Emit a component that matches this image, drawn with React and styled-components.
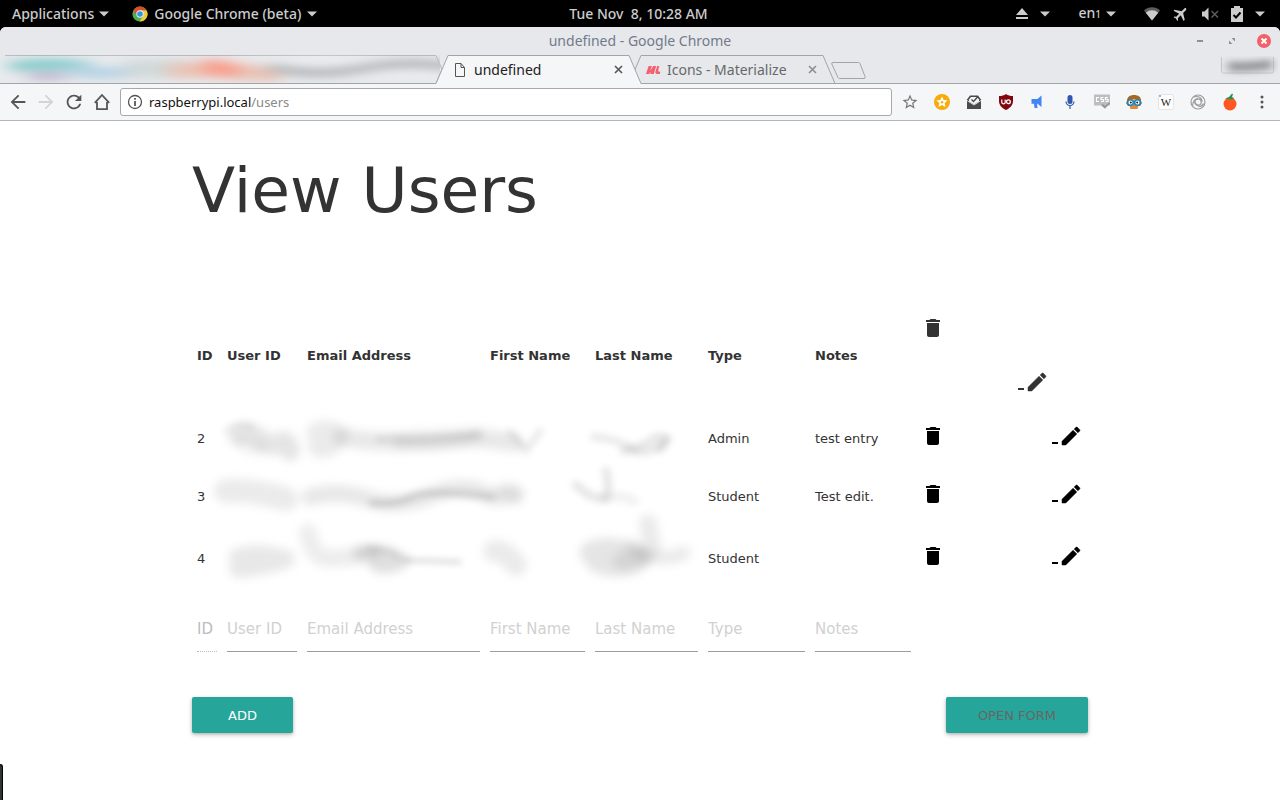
import React from "react";
import styled, { createGlobalStyle, css } from "styled-components";

const UI_FONT = '"Noto Sans", "Open Sans", sans-serif';
const PAGE_FONT = 'Verdana, "DejaVu Sans", sans-serif';

const GlobalStyle = createGlobalStyle`
  *, *::before, *::after { box-sizing: border-box; }
  body { margin: 0; background: #000; }
  svg { display: block; flex: none; }
  button { border: 0; padding: 0; margin: 0; background: none; font: inherit; color: inherit; cursor: pointer; }
`;

const Desktop = styled.div`
  min-height: 100vh;
  display: flex;
  flex-direction: column;
`;

/* ---------- desktop panel ---------- */

const Panel = styled.header`
  display: grid;
  grid-template-columns: 1fr auto 1fr;
  align-items: center;
  height: 27px;
  padding: 0 15px 0 12px;
  background: #000;
  color: #ccc;
  font: 500 14px/26px ${UI_FONT};
`;

const PanelGroup = styled.div`
  display: flex;
  align-items: center;
  gap: ${(p) => p.$gap}px;
  justify-content: ${(p) => (p.$end ? "flex-end" : "flex-start")};
`;

const PanelButton = styled.button`
  display: flex;
  align-items: center;
  gap: ${(p) => p.$gap || 5}px;
  white-space: pre;
`;

const LayoutIndex = styled.small`
  font-size: 10px;
`;

/* ---------- window frame ---------- */

const Window = styled.div`
  flex: 1;
  display: flex;
  flex-direction: column;
  overflow: hidden;
  border-radius: 6px 6px 0 0;
  background: #fff;
`;

const TitleBar = styled.div`
  display: grid;
  grid-template-columns: 1fr auto 1fr;
  align-items: center;
  height: 28px;
  padding: 0 8px;
  background: #e7e8eb;
  color: #727a8c;
  font: 14px/28px ${UI_FONT};
`;

const WindowTitle = styled.span`
  grid-column: 2;
`;

const WindowControls = styled.div`
  display: flex;
  justify-content: flex-end;
  gap: 16px;
`;

const TabStrip = styled.div`
  display: flex;
  align-items: flex-start;
  height: 29px;
  background: #e7e8eb;
  box-shadow: inset 0 -1px 0 #a2a4a8;
`;

const Tab = styled.div`
  position: relative;
  z-index: ${(p) => (p.$active ? 2 : 1)};
  display: flex;
  align-items: center;
  width: ${(p) => p.$width}px;
  height: 29px;
  padding: 0 18px 0 16px;
  margin-right: -12px;
  color: ${(p) => (p.$active ? "#222" : "#66686c")};
  font: 14px/29px ${UI_FONT};
`;

const TabShape = styled.svg`
  position: absolute;
  inset: 0;
  z-index: -1;
`;

const TabLabel = styled.span`
  flex: 1;
  margin-left: 6px;
  white-space: nowrap;
`;

const NewTab = styled.button`
  margin: 7px 0 0 8px;
`;

const Profile = styled.button`
  margin: 1px 2px 0 auto;
`;

const Toolbar = styled.div`
  display: flex;
  align-items: center;
  height: 37px;
  padding: 0 2px 0 4px;
  background: #f5f6f7;
  border-bottom: 1px solid #b3b5b8;
`;

const ToolButton = styled.button`
  display: flex;
  align-items: center;
  justify-content: center;
  width: ${(p) => (p.$wide ? 32 : 28)}px;
  height: 28px;
`;

const AddressBar = styled.div`
  flex: 1;
  display: flex;
  align-items: center;
  gap: 6px;
  height: 28px;
  margin: 0 2px 0 4px;
  padding: 0 6px;
  border: 1px solid #a6a8ab;
  border-radius: 3px;
  background: #fff;
  color: #8a8a8a;
  font: 13px/26px ${UI_FONT};
`;

const Host = styled.span`
  color: #111;
`;

/* ---------- page ---------- */

const Page = styled.main`
  width: 70%;
  margin: 0 auto;
  color: #333;
  font: 13px/20px ${PAGE_FONT};
`;

const Title = styled.h1`
  margin: 35px 0 75px;
  font-size: 63px;
  line-height: 70px;
  font-weight: 400;
`;

const TableWrap = styled.div`
  position: relative;
`;

const Table = styled.table`
  width: 100%;
  table-layout: fixed;
  border-collapse: collapse;
`;

const HeadRow = styled.tr`
  height: 108px;
`;

const Row = styled.tr`
  height: ${(p) => (p.$tall ? 66 : 58)}px;
`;

const cell = css`
  padding: ${(p) => (p.$text ? 2 : 0)}px 5px 0;
  text-align: left;
  vertical-align: ${(p) => p.$align || "middle"};
  white-space: nowrap;
`;

const Th = styled.th`
  ${cell}
`;

const Td = styled.td`
  ${cell}
`;

const HeadIcon = styled.div`
  display: flex;
  justify-content: ${(p) => (p.$edit ? "flex-end" : "flex-start")};
  padding: ${(p) => (p.$edit ? "0 34px 15px 0" : "15px 0 0")};
`;

const IconButton = styled.button`
  display: block;
  margin-left: ${(p) => (p.$end ? "auto" : 0)};
  padding-bottom: 4px;
  color: #000;
`;

const Field = styled.input`
  display: block;
  width: 100%;
  height: 46px;
  margin: 15px 0 0;
  padding: 0;
  border: 0;
  border-bottom: 1px solid #9e9e9e;
  border-radius: 0;
  outline: 0;
  background: transparent;
  color: #333;
  font: 15px/45px Tahoma, "DejaVu Sans", sans-serif;

  &::placeholder { color: #d1d1d1; opacity: 1; }
  &:disabled { border-bottom: 1px dotted #bdbdbd; }
  &:disabled::placeholder { color: #bcbcbc; }
`;

const Smudges = styled.svg`
  position: absolute;
  top: 0;
  left: 0;
  overflow: visible;
  pointer-events: none;
`;

const Actions = styled.div`
  display: flex;
  justify-content: space-between;
  margin-top: 45px;
`;

const Button = styled.button`
  height: 36px;
  padding: 1px ${(p) => (p.$muted ? 32 : 36)}px 0;
  border-radius: 2px;
  background: #26a69a;
  box-shadow: 0 2px 5px rgba(0, 0, 0, 0.2), 0 1px 3px rgba(0, 0, 0, 0.16);
  color: ${(p) => (p.$muted ? "#666" : "#fff")};
  text-transform: uppercase;
`;

const StatusBubble = styled.div`
  position: fixed;
  left: 0;
  bottom: 0;
  width: 3px;
  height: 36px;
  border: solid #000;
  border-width: 1px 1px 0 0;
  border-radius: 0 3px 0 0;
  background: #2e3436;
`;

/* ---------- icons ---------- */

const Icon = ({ d, size = 24, color = "currentColor", ...rest }) => (
  <svg width={size} height={size} viewBox="0 0 24 24" fill={color} aria-hidden="true" {...rest}>
    <path d={d} />
  </svg>
);

const ARROW = "M20 11H7.83l5.59-5.59L12 4l-8 8 8 8 1.41-1.41L7.83 13H20v-2z";
const RELOAD =
  "M17.65 6.35C16.2 4.9 14.21 4 12 4c-4.42 0-7.99 3.58-7.99 8s3.57 8 7.99 8c3.73 0 6.84-2.55 7.73-6h-2.08c-.82 2.33-3.04 4-5.65 4-3.31 0-6-2.69-6-6s2.69-6 6-6c1.66 0 3.14.69 4.22 1.78L13 11h7V4l-2.35 2.35z";
const STAR =
  "M22 9.24l-7.19-.62L12 2 9.19 8.63 2 9.24l5.46 4.73L5.82 21 12 17.27 18.18 21l-1.63-7.03L22 9.24zM12 15.4l-3.76 2.27 1-4.28-3.32-2.88 4.38-.38L12 6.1l1.71 4.04 4.38.38-3.32 2.88 1 4.28L12 15.4z";
const TRASH = "M6 19c0 1.1.9 2 2 2h8c1.1 0 2-.9 2-2V7H6v12zM19 4h-3.5l-1-1h-5l-1 1H5v2h14V4z";
const PENCIL =
  "M3 17.25V21h3.75L17.81 9.94l-3.75-3.75L3 17.25zM20.71 7.04c.39-.39.39-1.02 0-1.41l-2.34-2.34c-.39-.39-1.02-.39-1.41 0l-1.83 1.83 3.75 3.75 1.83-1.83z";
const PLANE =
  "M21 16v-2l-8-5V3.5c0-.83-.67-1.5-1.5-1.5S10 2.67 10 3.5V9l-8 5v2l8-2.5V19l-2 1.5V22l3.5-1 3.5 1v-1.5L13 19v-5.5l8 2.5z";

const Caret = () => (
  <svg width="10" height="6" viewBox="0 0 10 6" fill="#ccc" aria-hidden="true">
    <path d="M0 .5h10L5 5.5z" />
  </svg>
);

const EditIcon = () => (
  <svg width="31" height="24" viewBox="0 0 31 24" fill="currentColor" aria-hidden="true">
    <path d="M0 18h6v2H0z" />
    <path transform="translate(7 0)" d={PENCIL} stroke="currentColor" strokeWidth=".5" />
  </svg>
);

const ChromeLogo = () => (
  <svg width="16" height="16" viewBox="0 0 16 16" aria-hidden="true">
    <circle cx="8" cy="8" r="7.6" fill="#4caf50" />
    <path d="M8 8L1.4 4.2A7.6 7.6 0 0 1 14.6 4.3L8 4.3z" fill="#dd4b2f" />
    <path d="M8 4.4h6.6A7.6 7.6 0 0 1 7.6 15.6L11.2 9.8z" fill="#f2c83d" />
    <path d="M1.4 4.2L4.8 9.8 8 8V4.4z" fill="#dd4b2f" />
    <circle cx="8" cy="8" r="3.7" fill="#f1f1f1" />
    <circle cx="8" cy="8" r="2.8" fill="#2f97e0" />
  </svg>
);

const EjectIcon = () => (
  <svg width="12" height="12" viewBox="0 0 12 12" fill="#ccc" aria-hidden="true">
    <path d="M6 0l6 7H0zM0 9h12v2H0z" />
  </svg>
);

const WifiIcon = () => (
  <svg width="16" height="14" viewBox="0 0 16 14" aria-hidden="true">
    <path d="M0 3.5a11.5 11.5 0 0 1 16 0L8 13.5z" fill="#5c5c5c" />
    <path d="M1.8 5.7a9 9 0 0 1 12.4 0L8 13.5z" fill="#ccc" />
  </svg>
);

const MutedIcon = () => (
  <svg width="17" height="14" viewBox="0 0 17 14" aria-hidden="true">
    <path d="M0 4.500h2.500l4-4v13l-4-4H0z" fill="#ccc" />
    <path d="M9.500 4l6.500 6.500M16 4l-6.500 6.500" stroke="#5c5c5c" strokeWidth="1.500" />
  </svg>
);

const BatteryIcon = () => (
  <svg width="12" height="16" viewBox="0 0 12 16" aria-hidden="true">
    <path d="M0 2h3V0h6v2h3v14H0z" fill="#ccc" />
    <path d="M2.500 9l2.500 2.500 4.500-5" fill="none" stroke="#000" strokeWidth="2" />
  </svg>
);

const PageIcon = () => (
  <svg width="16" height="16" viewBox="0 0 16 16" fill="none" stroke="#555" aria-hidden="true">
    <path d="M3.500 1.500h5.500l3.500 4v9h-9zM9 1.500v4h3.500" />
  </svg>
);

const MaterializeIcon = () => (
  <svg width="16" height="16" viewBox="0 0 16 16" fill="#f4606f" aria-hidden="true">
    <path d="M3.600 4h3.200L4.400 12H1zM8.200 4h3L8.800 12H5.600L5 9.600zM12.200 4h2l-1 4.500c0 1.200.8 1.300 2.200 1.300l-.6 2.200h-2.600c-1.600 0-2.100-1-1.700-2.500z" />
  </svg>
);

const CloseX = ({ color }) => (
  <svg width="9" height="9" viewBox="0 0 9 9" stroke={color} strokeWidth="1.600" aria-hidden="true">
    <path d="M1 1l7 7M8 1L1 8" />
  </svg>
);

const HomeIcon = () => (
  <svg width="18" height="18" viewBox="0 0 18 18" fill="none" stroke="#555" strokeWidth="1.800" aria-hidden="true">
    <path d="M1.800 9.800L9 2l7.200 7.800M4 9v7.100h10V9" />
  </svg>
);

const InfoIcon = () => (
  <svg width="16" height="16" viewBox="0 0 16 16" fill="none" stroke="#555" aria-hidden="true">
    <circle cx="8" cy="8" r="6.500" strokeWidth="1.300" />
    <path d="M8 7v5M8 4v1.800" strokeWidth="1.800" />
  </svg>
);

const extensions = [
  { name: "Bookmark", art: <Icon d={STAR} size={18} color="#777" /> },
  {
    name: "Star manager",
    art: (
      <svg width="16" height="16" viewBox="0 0 16 16">
        <circle cx="8" cy="8" r="8" fill="#f9ab0b" />
        <path d="M8 2.500l1.700 3.600 3.900.4-3 2.600.9 3.900L8 11l-3.500 2 .9-3.900-3-2.600 3.900-.4z" fill="#fff" />
        <circle cx="8" cy="8.300" r="1.300" fill="#f9ab0b" />
      </svg>
    ),
  },
  {
    name: "Inbox",
    art: (
      <svg width="16" height="16" viewBox="0 0 16 16">
        <path d="M1 5.500L4 1.500h8l3 4V15H1z" fill="#4a4a4a" />
        <path d="M3 5.500L5 3h6l2 2.500v2L8 10.500 3 7.500z" fill="#f4f4f4" />
        <path d="M5.500 5.500l2 2 4.500-5" fill="none" stroke="#4a4a4a" strokeWidth="1.400" />
        <path d="M1 6.500l7 4.500 7-4.500" fill="none" stroke="#f5f6f7" strokeWidth=".8" />
      </svg>
    ),
  },
  {
    name: "Shield",
    art: (
      <svg width="16" height="16" viewBox="0 0 16 16">
        <path d="M8 0c2 1.500 4 2 7 2v5c0 4-2.500 7-7 9-4.500-2-7-5-7-9V2c3 0 5-.5 7-2z" fill="#800610" />
        <path d="M3.800 5.500v2.700a1.700 1.700 0 0 0 3.400 0V5.500" fill="none" stroke="#fff" strokeWidth="1.200" />
        <circle cx="10.400" cy="7.700" r="1.900" fill="none" stroke="#fff" strokeWidth="1.300" />
      </svg>
    ),
  },
  {
    name: "Announcements",
    art: (
      <svg width="16" height="16" viewBox="0 0 16 16" fill="#4285f4">
        <path d="M1.500 5h6l4-3.500V13L7.500 9.800H7l.5 4.200H4.500L4 9.800H1.500z" />
      </svg>
    ),
  },
  {
    name: "Voice",
    art: (
      <svg width="16" height="16" viewBox="0 0 16 16">
        <rect x="5.500" y="1" width="5" height="9" rx="2.500" fill="#2f57ae" />
        <path d="M4 7.500a4 4 0 0 0 8 0M8 11.500V15" fill="none" stroke="#2f57ae" strokeWidth="1.200" />
      </svg>
    ),
  },
  {
    name: "CSS viewer",
    art: (
      <svg width="18" height="16" viewBox="0 0 18 16">
        <path d="M1 .5h16v11h-2L12 15l-4-3.500H1z" fill="#bdbdbd" />
        <path d="M6 3.500H3.500v4H6M10.500 3.500H8v2h2.500v2H8M15 3.500h-2.500v2H15v2h-2.500" fill="none" stroke="#fff" strokeWidth="1.200" />
        <path d="M9 10.500l3 2.500 4.500-4" fill="none" stroke="#8f8f8f" strokeWidth="1.500" />
      </svg>
    ),
  },
  {
    name: "Reader",
    art: (
      <svg width="16" height="16" viewBox="0 0 16 16">
        <path d="M1 7C1 3 4 1 8 1s7.500 2 7 6l1 2-2 3H2L0 9z" fill="#a9661f" />
        <path d="M3 10h10l-1.500 5h-7z" fill="#e2873c" />
        <path d="M3 6.500Q8 3 13 6.500v3H3z" fill="#e8a65a" />
        <circle cx="4.500" cy="8.500" r="2.800" fill="#fff" stroke="#1785c4" strokeWidth="1.500" />
        <circle cx="11.500" cy="8.500" r="2.800" fill="#fff" stroke="#1785c4" strokeWidth="1.500" />
        <circle cx="4.800" cy="8.500" r="1" fill="#222" />
        <circle cx="11.200" cy="8.500" r="1" fill="#222" />
      </svg>
    ),
  },
  {
    name: "Wikipedia",
    art: (
      <svg width="16" height="16" viewBox="0 0 16 16">
        <rect x=".5" y=".5" width="15" height="15" rx="2" fill="#fdfdfd" stroke="#e4e4e4" />
        <text x="8" y="12" textAnchor="middle" fontFamily="Liberation Serif, serif" fontSize="11" fill="#222">W</text>
        <circle cx="2" cy="2" r="1" fill="#4bb3c4" />
      </svg>
    ),
  },
  {
    name: "Swirl",
    art: (
      <svg width="16" height="16" viewBox="0 0 16 16" fill="none" stroke="#9b9b9b" strokeWidth="1.200">
        <circle cx="8" cy="8" r="7" />
        <circle cx="8" cy="8" r="3.200" />
        <path d="M4 2.800C8 1.800 12 3.500 12 8M2.600 11.500C3 7 5 4.800 8 4.800M13.500 9.500C12 13 8 14 4.800 8" />
      </svg>
    ),
  },
  {
    name: "Tomato timer",
    art: (
      <svg width="16" height="18" viewBox="0 0 16 18">
        <ellipse cx="8" cy="11" rx="6.500" ry="6.500" fill="#ff5722" />
        <path d="M3 5.500l4-1.500L10 .5l1 .8L10 4l2.500 1.500L8.500 6.500z" fill="#22964f" />
      </svg>
    ),
  },
  {
    name: "Menu",
    art: (
      <svg width="4" height="14" viewBox="0 0 4 14" fill="#555">
        <circle cx="2" cy="2" r="1.500" />
        <circle cx="2" cy="7" r="1.500" />
        <circle cx="2" cy="12" r="1.500" />
      </svg>
    ),
  },
];

/* ---------- tabs ---------- */

function BrowserTab({ width, active, icon, label }) {
  const slope = 12;
  return (
    <Tab $width={width} $active={active}>
      <TabShape width={width} height="29" viewBox={`0 0 ${width} 29`} aria-hidden="true">
        <path
          d={`M0 28.500L${slope} .5H${width - slope}L${width} 28.500${active ? "V29H0" : ""}`}
          fill={active ? "#f5f6f7" : "#e7e8eb"}
        />
        <path d={`M0 28.500L${slope} .5H${width - slope}L${width} 28.500`} fill="none" stroke="#a2a4a8" />
        {!active && <path d={`M0 28.500H${width}`} stroke="#a2a4a8" />}
      </TabShape>
      {icon}
      <TabLabel>{label}</TabLabel>
      <button aria-label={`Close ${label}`}>
        <CloseX color={active ? "#555" : "#8b8d91"} />
      </button>
    </Tab>
  );
}

function SmearedTabs() {
  return (
    <Tab $width={448}>
      <TabShape width="448" height="29" viewBox="0 0 448 29" aria-hidden="true">
        <defs>
          <filter id="tabBlur" filterUnits="userSpaceOnUse" x="-40" y="-20" width="520" height="70">
            <feGaussianBlur stdDeviation="10 4" />
          </filter>
          <clipPath id="tabClip"><rect width="440" height="29" /></clipPath>
        </defs>
        <path d="M5 .5H436l6 14" fill="none" stroke="#b4b6ba" />
        <g clipPath="url(#tabClip)">
          <g filter="url(#tabBlur)" fill="none">
            <path d="M-30 15Q60 11 120 14T240 14T470 14" stroke="#eceef0" strokeWidth="18" />
            <path d="M8 12Q50 7 92 12" stroke="#82cccc" strokeWidth="11" />
            <path d="M28 21H66" stroke="#c0b4d0" strokeWidth="8" />
            <path d="M70 16Q105 19 135 16" stroke="#b8d4e4" strokeWidth="12" />
            <path d="M125 14H190" stroke="#d0d9d9" strokeWidth="18" />
            <path d="M168 16Q220 13 280 20" stroke="#e8c4b6" strokeWidth="16" />
            <path d="M202 13Q220 11 240 17" stroke="#f8a08e" strokeWidth="16" />
            <path d="M268 12Q315 22 365 13T470 15" stroke="#b4b6b9" strokeWidth="9" />
          </g>
        </g>
        <path d="M0 28.500H436L442 14.500" fill="none" stroke="#a2a4a8" />
      </TabShape>
    </Tab>
  );
}

/* ---------- table data ---------- */

const columns = [
  { label: "ID", width: 30 },
  { label: "User ID", width: 80 },
  { label: "Email Address", width: 183 },
  { label: "First Name", width: 105 },
  { label: "Last Name", width: 113 },
  { label: "Type", width: 107 },
  { label: "Notes", width: 106 },
];

const users = [
  { id: 2, type: "Admin", notes: "test entry" },
  { id: 3, type: "Student", notes: "Test edit." },
  { id: 4, type: "Student", notes: "", tall: true },
];

/* Redaction strokes painted over the private columns: [path, width, opacity] */
const broadStrokes = [
  ["M46 134Q56 128 68 138T92 140Q98 144 98 150", 20, 0.1],
  ["M50 142Q60 150 68 146", 14, 0.05],
  ["M124 132Q136 126 146 134Q138 150 126 146", 20, 0.08],
  ["M150 136Q180 142 210 140T286 137Q300 138 322 142", 18, 0.09],
  ["M206 142Q250 146 286 134", 12, 0.07],
  ["M34 190Q60 188 94 198", 24, 0.08],
  ["M118 196Q146 188 176 198T240 194T300 196L322 194", 17, 0.09],
  ["M312 190Q318 188 324 194", 18, 0.05],
  ["M46 256Q66 250 94 258Q80 264 46 268", 18, 0.09],
  ["M116 232Q120 252 130 256T180 252", 18, 0.07],
  ["M168 252Q196 248 210 260Q198 268 184 264", 14, 0.12],
  ["M302 250Q314 250 324 264", 22, 0.08],
  ["M400 252Q420 244 446 258Q430 268 406 260", 24, 0.1],
  ["M430 260Q456 258 460 244L456 222", 18, 0.08],
  ["M440 246Q466 264 492 252", 14, 0.08],
];
const fineStrokes = [
  ["M34 130Q44 120 60 126", 5, 0.06],
  ["M186 138Q240 138 286 134", 6, 0.07],
  ["M318 132Q328 140 334 150L348 130", 7, 0.08],
  ["M402 136Q426 138 440 148T476 138", 8, 0.08],
  ["M432 150Q448 148 464 136Q480 134 468 148", 9, 0.09],
  ["M180 202Q204 204 220 196T300 196", 7, 0.12],
  ["M384 184Q398 198 414 198Q418 184 414 170", 9, 0.09],
  ["M412 196Q430 194 442 200", 10, 0.05],
  ["M178 248Q196 248 206 256", 6, 0.08],
  ["M212 259L268 261", 4, 0.16],
];

const renderStrokes = (list) =>
  list.map(([d, w, o]) => <path key={d} d={d} strokeWidth={w} opacity={o} />);

export default function App() {
  return (
    <Desktop>
      <GlobalStyle />
      <Panel>
        <PanelGroup $gap={23}>
          <PanelButton>Applications<Caret /></PanelButton>
          <PanelButton $gap={6}><ChromeLogo />Google Chrome (beta)<Caret /></PanelButton>
        </PanelGroup>
        <PanelButton>{"Tue Nov  8, 10:28 AM"}</PanelButton>
        <PanelGroup $gap={28} $end>
          <PanelButton $gap={12} aria-label="Removable devices"><EjectIcon /><Caret /></PanelButton>
          <PanelButton><span>en<LayoutIndex>1</LayoutIndex></span><Caret /></PanelButton>
          <PanelButton $gap={12} aria-label="System menu">
            <WifiIcon />
            <Icon d={PLANE} size={18} color="#ccc" transform="rotate(45)" />
            <MutedIcon />
            <BatteryIcon />
            <Caret />
          </PanelButton>
        </PanelGroup>
      </Panel>

      <Window>
        <TitleBar>
          <WindowTitle>undefined - Google Chrome</WindowTitle>
          <WindowControls>
            <button aria-label="Minimize">
              <svg width="16" height="16"><path d="M5 7h6v2H5z" fill="#8a8fa0" /></svg>
            </button>
            <button aria-label="Restore">
              <svg width="16" height="16"><path d="M7.500 5H11v3.500zM5 7.500V11h3.500z" fill="#8a8fa0" /></svg>
            </button>
            <button aria-label="Close window">
              <svg width="16" height="16">
                <circle cx="8" cy="8" r="7" fill="#f46067" />
                <path d="M5.500 5.500l5 5M10.500 5.500l-5 5" stroke="#fff" strokeWidth="2" />
              </svg>
            </button>
          </WindowControls>
        </TitleBar>

        <TabStrip>
          <SmearedTabs />
          <BrowserTab width={205} active icon={<PageIcon />} label="undefined" />
          <BrowserTab width={206} icon={<MaterializeIcon />} label="Icons - Materialize" />
          <NewTab aria-label="New tab">
            <svg width="36" height="18" viewBox="0 0 36 18">
              <path d="M2 .5h25.500q1 0 1.500 1l5 13q.6 2-1 2H9q-1.500 0-2-1L.8 2Q.4.5 2 .5z" fill="#e7e8eb" stroke="#a2a4a8" />
            </svg>
          </NewTab>
          <Profile aria-label="Profile">
            <svg width="58" height="28" viewBox="0 0 58 28">
              <defs>
                <filter id="profileBlur" filterUnits="userSpaceOnUse" x="0" y="-6" width="58" height="34">
                  <feGaussianBlur stdDeviation="5 3" />
                </filter>
              </defs>
              <path d="M1.500 1v14q0 2 2 2h48q2 0 2-2V1" fill="none" stroke="#c6c8cb" />
              <path d="M8 10Q26 12 52 8" fill="none" stroke="#999b9e" strokeWidth="10" filter="url(#profileBlur)" />
            </svg>
          </Profile>
        </TabStrip>

        <Toolbar>
          <ToolButton aria-label="Back"><Icon d={ARROW} size={22} color="#555" /></ToolButton>
          <ToolButton aria-label="Forward"><Icon d={ARROW} size={22} color="#d3d4d6" transform="rotate(180)" /></ToolButton>
          <ToolButton aria-label="Reload"><Icon d={RELOAD} size={22} color="#555" /></ToolButton>
          <ToolButton aria-label="Home"><HomeIcon /></ToolButton>
          <AddressBar>
            <InfoIcon />
            <span><Host>raspberrypi.local</Host>/users</span>
          </AddressBar>
          {extensions.map((e) => (
            <ToolButton key={e.name} $wide aria-label={e.name}>{e.art}</ToolButton>
          ))}
        </Toolbar>

        <Page>
          <Title>View Users</Title>
          <TableWrap>
            <Table>
              <colgroup>
                {columns.map((c) => <col key={c.label} style={{ width: c.width }} />)}
                <col style={{ width: 34 }} />
                <col />
              </colgroup>
              <thead>
                <HeadRow>
                  {columns.map((c) => <Th key={c.label} scope="col" $text>{c.label}</Th>)}
                  <Th scope="col" $align="top" aria-label="Delete">
                    <HeadIcon><Icon d={TRASH} /></HeadIcon>
                  </Th>
                  <Th scope="col" $align="bottom" aria-label="Edit">
                    <HeadIcon $edit><EditIcon /></HeadIcon>
                  </Th>
                </HeadRow>
              </thead>
              <tbody>
                {users.map((u) => (
                  <Row key={u.id} $tall={u.tall}>
                    <Td $text>{u.id}</Td>
                    <Td />
                    <Td />
                    <Td />
                    <Td />
                    <Td $text>{u.type}</Td>
                    <Td $text>{u.notes}</Td>
                    <Td><IconButton aria-label={`Delete user ${u.id}`}><Icon d={TRASH} /></IconButton></Td>
                    <Td><IconButton $end aria-label={`Edit user ${u.id}`}><EditIcon /></IconButton></Td>
                  </Row>
                ))}
                <tr>
                  {columns.map((c) => (
                    <Td key={c.label}>
                      <Field type="text" placeholder={c.label} aria-label={c.label} disabled={c.label === "ID"} />
                    </Td>
                  ))}
                  <Td />
                  <Td />
                </tr>
              </tbody>
            </Table>
            <Smudges width="520" height="290" viewBox="0 0 520 290" aria-hidden="true">
              <defs>
                <filter id="broad" filterUnits="userSpaceOnUse" x="0" y="90" width="540" height="210">
                  <feGaussianBlur stdDeviation="5" />
                </filter>
                <filter id="fine" filterUnits="userSpaceOnUse" x="0" y="90" width="540" height="210">
                  <feGaussianBlur stdDeviation="3" />
                </filter>
              </defs>
              <g fill="none" stroke="#000" strokeLinecap="round" strokeLinejoin="round">
                <g filter="url(#broad)">{renderStrokes(broadStrokes)}</g>
                <g filter="url(#fine)">{renderStrokes(fineStrokes)}</g>
              </g>
            </Smudges>
          </TableWrap>
          <Actions>
            <Button>Add</Button>
            <Button $muted>Open form</Button>
          </Actions>
        </Page>
      </Window>
      <StatusBubble />
    </Desktop>
  );
}
